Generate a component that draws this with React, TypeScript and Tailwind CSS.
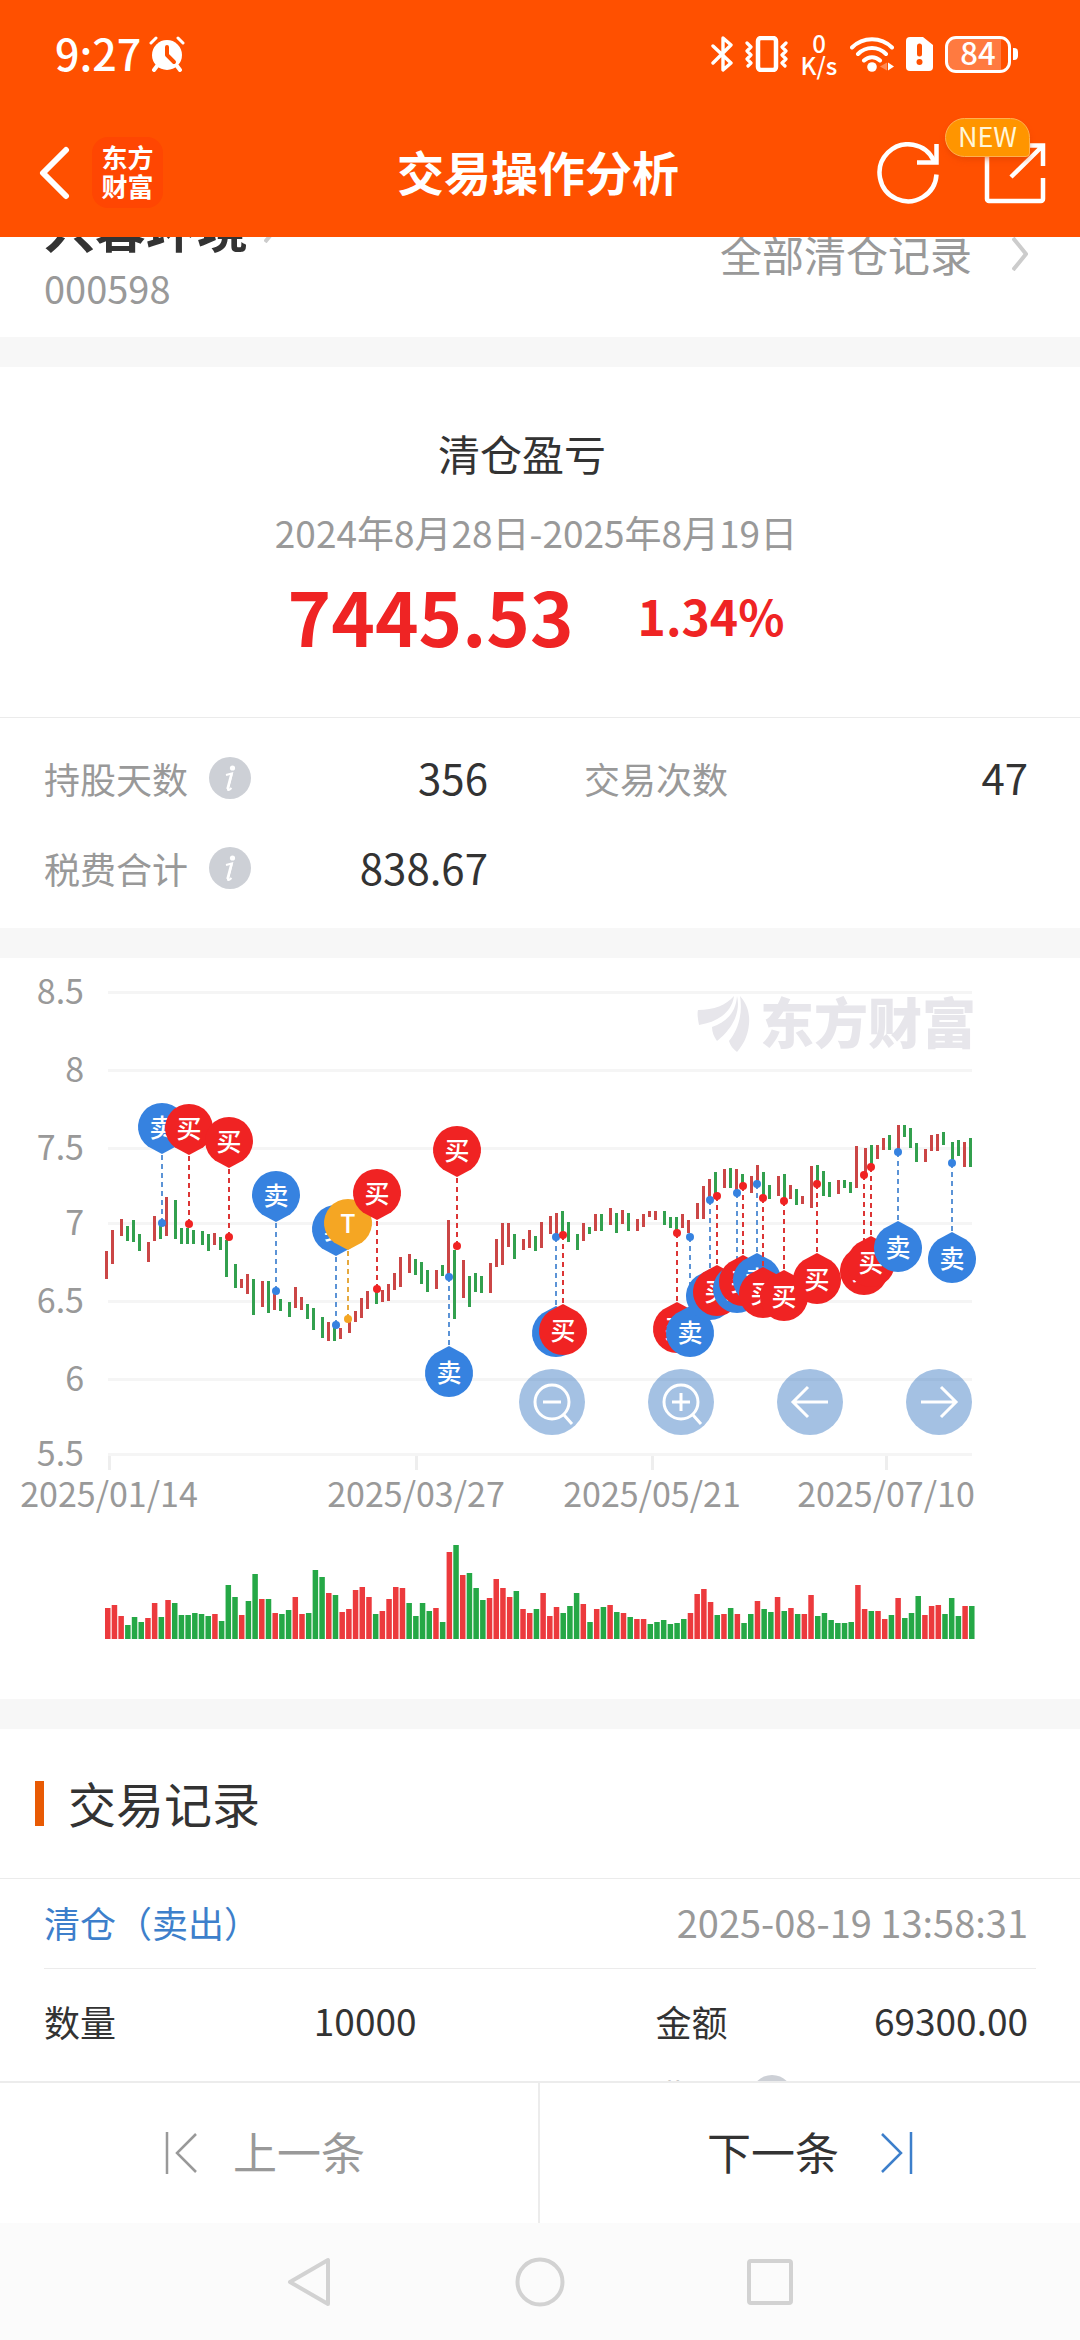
// Trade analysis page for a closed position: profit summary, price chart with trade pins and records.
import React from 'react';

type TradeKind = 'buy' | 'sell' | 't';

type Trade = {
  kind: TradeKind;
  x: number;
  y: number;
  side: 'above' | 'below';
};

const TRADE_STYLE: Record<TradeKind, { label: string; pin: string; line: string }> = {
  buy: { label: '买', pin: '#f02323', line: '#dc3535' },
  sell: { label: '卖', pin: '#3682e0', line: '#5b93d6' },
  t: { label: 'T', pin: '#f5a623', line: '#e6a93e' },
};

// r = up day, g = down day, then top-bottom of the bar
const CANDLES =
  'r251-279 r230-264 r219-236 g226-241 g220-242 g234-251 r242-262 r216-241 g226-239 r197-236 ' +
  'g200-239 g228-244 g228-244 g230-244 g231-245 g234-251 r233-245 g237-250 g240-277 g264-288 ' +
  'r279-288 r274-294 g279-315 r281-307 g281-313 r292-310 g299-311 g302-317 r287-308 r297-310 ' +
  'g304-319 g308-330 g317-338 r322-341 g328-341 r328-339 r322-333 r311-322 r298-318 r291-309 ' +
  'g290-304 r290-302 r284-301 r273-290 r257-287 r254-273 g259-275 g262-284 g270-292 r270-289 ' +
  'g265-276 r220-276 g250-319 r260-298 g276-307 g273-292 g276-293 r263-293 r239-267 r223-265 ' +
  'r223-247 g234-259 r239-250 r230-248 g236-251 r222-248 r216-234 r213-235 g211-233 g222-242 ' +
  'g234-250 r223-241 g227-234 r214-231 g214-231 r208-225 g213-233 r210-224 g213-231 r219-231 ' +
  'r214-227 r211-217 r211-220 g211-225 g217-228 g217-232 r214-228 r220-233 r203-219 r186-219 ' +
  'r179-198 g172-195 r169-188 g168-188 r169-192 g174-185 r176-193 r165-183 g172-197 g185-199 ' +
  'r176-196 g174-200 r185-199 g189-205 r196-204 r166-208 g165-183 g171-196 g182-197 r180-194 ' +
  'g180-188 g182-193 r146-188 r148-173 g145-165 r145-159 r138-150 g135-150 r125-151 g125-137 ' +
  'g128-148 g143-162 r149-162 r135-151 r134-151 g132-145 g142-162 g140-156 r142-167 g138-167';

const VOLUMES =
  'r31 r34 r23 g14 g22 g17 r21 r36 g22 r39 g36 g24 g24 g26 g25 g23 r25 g18 g54 g42 ' +
  'r24 g38 g65 r40 g40 r26 g25 g29 r42 r25 g26 g69 g62 r46 g44 r27 r30 r49 r52 r42 ' +
  'g25 r28 r40 r52 r51 g36 g23 g36 g28 r31 g17 r87 g94 r64 g66 g51 g39 r41 r60 r51 ' +
  'r42 g48 r30 r26 g30 r46 r23 r32 g26 g33 g46 r35 g17 r30 g32 r34 g27 r26 g22 r20 ' +
  'r20 g15 g17 g19 g15 g16 g20 r26 r45 r50 r37 g24 r25 g31 r25 g16 g25 r38 g30 g27 ' +
  'r42 g28 r31 g25 r25 r44 g23 g26 g19 g16 g16 g17 r54 r30 g28 r28 r20 g24 r41 g21 ' +
  'g26 g43 r24 r33 r34 g25 g41 g23 r33 g33';

const TRADES: Trade[] = [
  { kind: 'sell', x: 162, y: 223, side: 'above' },
  { kind: 'buy', x: 189, y: 224, side: 'above' },
  { kind: 'buy', x: 229, y: 237, side: 'above' },
  { kind: 'sell', x: 276, y: 291, side: 'above' },
  { kind: 'sell', x: 336, y: 325, side: 'above' },
  { kind: 't', x: 348, y: 319, side: 'above' },
  { kind: 'buy', x: 377, y: 289, side: 'above' },
  { kind: 'sell', x: 449, y: 277, side: 'below' },
  { kind: 'buy', x: 457, y: 246, side: 'above' },
  { kind: 'sell', x: 556, y: 237, side: 'below' },
  { kind: 'buy', x: 563, y: 235, side: 'below' },
  { kind: 'buy', x: 677, y: 233, side: 'below' },
  { kind: 'sell', x: 690, y: 237, side: 'below' },
  { kind: 'sell', x: 710, y: 200, side: 'below' },
  { kind: 'buy', x: 717, y: 196, side: 'below' },
  { kind: 'sell', x: 737, y: 193, side: 'below' },
  { kind: 'buy', x: 743, y: 186, side: 'below' },
  { kind: 'sell', x: 757, y: 184, side: 'below' },
  { kind: 'buy', x: 763, y: 198, side: 'below' },
  { kind: 'buy', x: 784, y: 201, side: 'below' },
  { kind: 'buy', x: 817, y: 184, side: 'below' },
  { kind: 'buy', x: 864, y: 175, side: 'below' },
  { kind: 'buy', x: 871, y: 167, side: 'below' },
  { kind: 'sell', x: 898, y: 152, side: 'below' },
  { kind: 'sell', x: 952, y: 163, side: 'below' },
];

const GRID = [
  { label: '8.5', y: -8 },
  { label: '8', y: 70 },
  { label: '7.5', y: 148 },
  { label: '7', y: 223 },
  { label: '6.5', y: 301 },
  { label: '6', y: 379 },
  { label: '5.5', y: 454 },
];

const DATES = [
  { label: '2025/01/14', x: 109 },
  { label: '2025/03/27', x: 416 },
  { label: '2025/05/21', x: 652 },
  { label: '2025/07/10', x: 886 },
];

const STEP = 6.698;

function StatusBar() {
  return (
    <div className="flex h-[108px] items-center justify-between pr-[62px] pl-[55px]">
      <div className="flex items-center gap-2">
        <span className="pb-1 text-[43px] leading-[60px] font-medium">9:27</span>
        <svg className="h-9 w-9" viewBox="0 0 36 36" fill="none" stroke="#fff" strokeLinecap="round">
          <circle cx="18" cy="19" r="15" fill="#fff" stroke="none" />
          <path d="M2 7l5-5M34 7l-5-5" strokeWidth="3" />
          <path d="M8 30l-3 4M28 30l3 4" strokeWidth="4" />
          <path d="M18 11v8l7 7" stroke="#ff5000" strokeWidth="4" strokeLinejoin="round" />
        </svg>
      </div>
      <div className="flex items-center gap-3">
        <svg className="h-9 w-[22px]" viewBox="0 0 22 36" fill="none" stroke="#fff" strokeWidth="3.4" strokeLinecap="round" strokeLinejoin="round">
          <path d="M2 10l18 17-8 7V2l8 7L2 27" />
        </svg>
        <svg className="h-9 w-[43px]" viewBox="0 0 43 36" fill="none" stroke="#fff" strokeLinecap="round" strokeLinejoin="round">
          <rect x="13" y="2" width="18" height="32" rx="3" strokeWidth="4.5" />
          <path d="M2 7l4 4-4 4 4 4-4 4 4 4-3 3M41 7l-4 4 4 4-4 4 4 4-4 4 3 3" strokeWidth="3.2" />
        </svg>
        <div className="flex w-[38px] flex-col items-center text-[24px] leading-[22px] font-medium">
          <span>0</span>
          <span>K/s</span>
        </div>
        <svg className="h-9 w-11" viewBox="0 0 44 36" fill="none" stroke="#fff" strokeWidth="4" strokeLinecap="round">
          <path d="M2 11.500C13 .5 31 .5 42 11.500M8 18c8-8 20-8 28 0M14 24.500c4.500-4.500 11.500-4.500 16 0" />
          <circle cx="22" cy="31" r="4.800" fill="#fff" stroke="none" />
          <path d="M37 26.500v8l-7-4z" fill="#ff8a55" stroke="none" />
          <path d="M38 26.500l6 4-6 4z" fill="#fff" stroke="none" />
        </svg>
        <svg className="h-[34px] w-[27px]" viewBox="0 0 27 34">
          <path d="M4 0h13l10 8v22a4 4 0 0 1-4 4H4a4 4 0 0 1-4-4V4a4 4 0 0 1 4-4z" fill="#fff" />
          <path d="M13.500 9v8" stroke="#ff5000" strokeWidth="5" strokeLinecap="round" />
          <circle cx="13.500" cy="25" r="3" fill="#ff5000" />
        </svg>
        <div className="flex items-center gap-[2px]">
          <div className="flex h-[37px] w-[66px] items-center justify-center rounded-[11px] border-3 border-white bg-linear-to-r from-[#ff7a40] from-88% to-[#ff5000] to-88% pb-1 text-[31px] leading-[32px] font-medium">
            84
          </div>
          <div className="h-3 w-[5px] rounded-r-sm bg-white" />
        </div>
      </div>
    </div>
  );
}

function Header() {
  return (
    <header className="relative z-10 bg-[#ff5000] text-white">
      <StatusBar />
      <div className="grid h-[129px] grid-cols-[1fr_auto_1fr] items-center pr-[34px] pl-[30px]">
        <div className="flex items-center gap-4">
          <button type="button" aria-label="返回">
            <svg className="h-[54px] w-[46px]" viewBox="0 0 46 54" fill="none" stroke="#fff" strokeWidth="6" strokeLinecap="round" strokeLinejoin="round">
              <path d="M36 4L13 27l23 23" />
            </svg>
          </button>
          <div className="flex h-[71px] w-[71px] flex-col items-center justify-center rounded-2xl bg-[#ff4602] pb-[3px] text-[26px] leading-[29px] font-bold">
            <span>东方</span>
            <span>财富</span>
          </div>
        </div>
        <h1 className="pb-1 text-[47px] leading-[60px] font-bold">交易操作分析</h1>
        <div className="flex items-center justify-end gap-[45px]">
          <button type="button" aria-label="刷新">
            <svg className="h-[62px] w-[62px]" viewBox="0 0 62 62" fill="none" stroke="#fff" strokeWidth="4.500">
              <path d="M59.500 32.500A28.500 28.500 0 1 1 57 19" />
              <path d="M59.500 2v18.500H40" />
            </svg>
          </button>
          <button type="button" aria-label="分享" className="relative">
            <svg className="h-[62px] w-[62px]" viewBox="0 0 62 62" fill="none" stroke="#fff" strokeWidth="4.500">
              <path d="M3 8v49a2 2 0 0 0 2 2h52a2 2 0 0 0 2-2V36" />
              <path d="M36 3.500h23V24M27 35L58 4.500" />
            </svg>
            <span className="absolute right-4 bottom-[47px] flex h-[39px] w-[85px] items-center justify-center rounded-[20px] rounded-br-sm border border-[#ffb050] bg-[#ff9500] pb-[3px] text-[27px] leading-[36px] text-[#fff6d8] shadow-md shadow-[#d84400]/40">
              NEW
            </span>
          </button>
        </div>
      </div>
    </header>
  );
}

function Chevron() {
  return (
    <svg className="h-[34px] w-4" viewBox="0 0 16 34" fill="none" stroke="#ccc" strokeWidth="4">
      <path d="M1 1l13 16L1 33" />
    </svg>
  );
}

function InfoIcon() {
  return (
    <button type="button" aria-label="说明" className="h-[42px] w-[42px]">
      <svg viewBox="0 0 42 42">
        <circle cx="21" cy="21" r="21" fill="#cdd0d6" />
        <circle cx="23.500" cy="11" r="2.600" fill="#fff" />
        <path d="M17 18l6-1.500-4 15.500c-.3 1.500 1 1.500 3.500-1" fill="none" stroke="#fff" strokeWidth="2" />
        <path d="M22.500 17l-4 15" stroke="#fff" strokeWidth="2.600" />
      </svg>
    </button>
  );
}

function Stat({ label, value, info = false }: { label: string; value: string; info?: boolean }) {
  return (
    <div className="flex h-[90px] items-center justify-between">
      <dt className="flex items-center gap-[21px] text-[36px] text-[#999]">
        {label}
        {info && <InfoIcon />}
      </dt>
      <dd className="pb-1 text-[42px] text-[#333]">{value}</dd>
    </div>
  );
}

function Pin({ kind, x, y, side }: Trade) {
  const { label, pin, line } = TRADE_STYLE[kind];
  const above = side === 'above';
  const tip = above ? y - 69 : y + 69;
  const center = above ? tip - 26 : tip + 27;
  const shape = above
    ? 'M0 26L-14 18.500A24 24 0 1 1 14 18.500Z'
    : 'M0 -27L-14 -19.500A24 24 0 1 0 14 -19.500Z';

  return (
    <g>
      <line x1={x} y1={y} x2={x} y2={tip} stroke={line} strokeWidth="2" strokeDasharray="5 4" />
      <circle cx={x} cy={y} r="4" fill={pin} />
      <path d={shape} transform={`translate(${x} ${center})`} fill={pin} />
      <text x={x} y={center + 9} textAnchor="middle" className="fill-white text-[25px] font-medium">
        {label}
      </text>
    </g>
  );
}

function PriceChart() {
  return (
    <svg className="block w-full" viewBox="0 0 1080 741">
      <g transform="translate(0 42)">
        {GRID.map((line) => (
          <g key={line.label}>
            <rect x="108" y={line.y - 1} width="864" height="3" fill="#f5f5f5" />
            <text x="84" y={line.y + 12} textAnchor="end" className="fill-[#999] text-[34px]">
              {line.label}
            </text>
          </g>
        ))}
        {DATES.map((date) => (
          <g key={date.label}>
            <rect x={date.x - 1} y="456" width="3" height="14" fill="#eee" />
            <text x={date.x} y="507" textAnchor="middle" className="fill-[#999] text-[34px]">
              {date.label}
            </text>
          </g>
        ))}

        <g fill="#e7e6eb">
          <path d="M698 10c16 0 28-5 36-14-2 16-16 26-35 29-1-5-2-11-1-15z" />
          <path d="M712 27c14-5 24-14 25-31 4 17-5 33-20 45-3-4-5-9-5-14z" />
          <path d="M729 41c9-11 14-27 11-45 7 8 10 17 9 28-1 12-6 21-12 28-4-3-7-7-8-11z" />
          <text x="760" y="44" className="text-[54px] font-black">东方财富</text>
        </g>

        {CANDLES.split(' ').map((candle, i) => {
          const [top, bottom] = candle.slice(1).split('-').map(Number);
          return (
            <rect
              key={i}
              x={105 + 3 * Math.floor((i * STEP) / 3 + 0.75)}
              y={top}
              width="3"
              height={bottom - top}
              fill={candle[0] === 'r' ? '#cb4646' : '#32a04e'}
            />
          );
        })}
        {VOLUMES.split(' ').map((volume, i) => {
          const height = Number(volume.slice(1));
          return (
            <rect
              key={i}
              x={105 + i * STEP}
              y={639 - height}
              width="5.500"
              height={height}
              fill={volume[0] === 'r' ? '#ec3a3d' : '#25a846'}
            />
          );
        })}
        {TRADES.map((trade) => (
          <Pin key={trade.x} {...trade} />
        ))}
      </g>
    </svg>
  );
}

const CHART_ACTIONS = [
  { label: '缩小', path: 'M24 33h18M45 46l8 9', lens: true },
  { label: '放大', path: 'M24 33h18M33 24v18M45 46l8 9', lens: true },
  { label: '向左', path: 'M51 33H16M31 18L16 33l15 15', lens: false },
  { label: '向右', path: 'M15 33h35M35 18l15 15-15 15', lens: false },
];

function ChartSection() {
  return (
    <section className="relative bg-white">
      <PriceChart />
      <div className="absolute top-[411px] right-[10%] flex gap-[63px]">
        {CHART_ACTIONS.map((action) => (
          <button key={action.label} type="button" aria-label={action.label} className="h-[66px] w-[66px] rounded-full bg-[#3575c1]/45">
            <svg viewBox="0 0 66 66" fill="none" stroke="#fff" strokeWidth="3">
              {action.lens && <circle cx="33" cy="33" r="17" />}
              <path d={action.path} />
            </svg>
          </button>
        ))}
      </div>
    </section>
  );
}

function RecordField({ label, value, info = false }: { label: string; value: string; info?: boolean }) {
  return (
    <div className="flex h-[75px] items-center justify-between text-[#333]">
      <dt className="flex items-center gap-[23px] text-[36px]">
        {label}
        {info && <InfoIcon />}
      </dt>
      <dd className="text-[37px]">{value}</dd>
    </div>
  );
}

function Footer() {
  return (
    <footer className="relative z-10">
      <div className="grid h-[142px] grid-cols-2 divide-x-2 divide-[#ececec] border-t-2 border-[#ececec] bg-white text-[44px] leading-[60px]">
        <button type="button" className="flex items-center justify-center gap-9 pr-2 text-[#999]">
          <svg className="h-11 w-8" viewBox="0 0 32 44" fill="none" stroke="#999" strokeWidth="2.500">
            <path d="M2 1v42M31 3L12 22l19 19" />
          </svg>
          <span className="pb-1">上一条</span>
        </button>
        <button type="button" className="flex items-center justify-center gap-[42px] text-[#333]">
          <span className="pb-1">下一条</span>
          <svg className="h-11 w-8" viewBox="0 0 32 44" fill="none" stroke="#3d7fcb" strokeWidth="2.500">
            <path d="M30 1v42M1 3l19 19L1 41" />
          </svg>
        </button>
      </div>
      <nav className="flex h-[117px] items-center justify-center gap-[180px] bg-[#fbfbfb]">
        <button type="button" aria-label="后退">
          <svg className="h-[50px] w-[50px]" viewBox="0 0 50 50" fill="none" stroke="#d2d2d2" strokeWidth="4" strokeLinejoin="round">
            <path d="M43 3v44L5 25z" />
          </svg>
        </button>
        <button type="button" aria-label="主页">
          <svg className="h-[50px] w-[50px]" viewBox="0 0 50 50" fill="none" stroke="#d2d2d2" strokeWidth="4">
            <circle cx="25" cy="25" r="22.500" />
          </svg>
        </button>
        <button type="button" aria-label="最近任务">
          <svg className="h-[50px] w-[50px]" viewBox="0 0 50 50" fill="none" stroke="#d2d2d2" strokeWidth="4">
            <rect x="4" y="4" width="42" height="42" rx="2" />
          </svg>
        </button>
      </nav>
    </footer>
  );
}

export default function App() {
  return (
    <div lang="zh-CN" className="flex h-screen flex-col bg-white font-['Noto_Sans_CJK_SC',sans-serif] text-[#333]">
      <Header />

      <main className="min-h-0 flex-1 overflow-hidden">
        {/* scrolled a little, so the stock name sits half under the header */}
        <section className="-mt-[41px] flex items-center justify-between pr-[52px] pb-[17px] pl-11">
          <div>
            <a href="#stock" className="flex items-center gap-4 text-[51px] leading-[60px] font-bold">
              兴蓉环境
              <Chevron />
            </a>
            <p className="text-[38px] leading-[64px] text-[#999]">000598</p>
          </div>
          <a href="#closed" className="flex items-center gap-10 pb-2 text-[42px] leading-[60px] text-[#999]">
            全部清仓记录
            <Chevron />
          </a>
        </section>

        <section className="border-t-30 border-[#f7f7f7] pt-14 pr-2 pb-12 text-center">
          <h2 className="pr-7 text-[42px] leading-[60px]">清仓盈亏</h2>
          <p className="mt-5 text-[37px] leading-[58px] text-[#999]">2024年8月28日-2025年8月19日</p>
          <div className="flex items-center justify-center gap-16 leading-[108px] font-bold text-[#ef2424]">
            <span className="text-[74px]">7445.53</span>
            <span className="text-[48px]">1.34%</span>
          </div>
        </section>

        <dl className="grid grid-cols-2 gap-x-24 border-t border-[#ebebeb] py-[15px] pr-[52px] pl-11">
          <Stat label="持股天数" value="356" info />
          <Stat label="交易次数" value="47" />
          <Stat label="税费合计" value="838.67" info />
        </dl>

        <div className="border-y-30 border-[#f7f7f7]">
          <ChartSection />
        </div>

        <section>
          <div className="flex h-[149px] items-center gap-6 pl-[35px]">
            <span className="h-[45px] w-[9px] bg-[#e85a04]" />
            <h2 className="pb-1 text-[48px] leading-[60px]">交易记录</h2>
          </div>
          <div className="border-t border-[#ebebeb] px-11">
            <div className="flex h-[90px] items-center justify-between border-b border-[#ebebeb] pr-2 pb-1">
              <h3 className="text-[36px] text-[#3d7fcb]">清仓（卖出）</h3>
              <time className="text-[38px] text-[#999]">2025-08-19 13:58:31</time>
            </div>
            <dl className="grid grid-cols-2 gap-x-[239px] pt-[14px] pr-2">
              <RecordField label="数量" value="10000" />
              <RecordField label="金额" value="69300.00" />
              <RecordField label="价格" value="6.930" />
              <RecordField label="费用" value="39.58" info />
            </dl>
          </div>
        </section>
      </main>

      <Footer />
    </div>
  );
}
